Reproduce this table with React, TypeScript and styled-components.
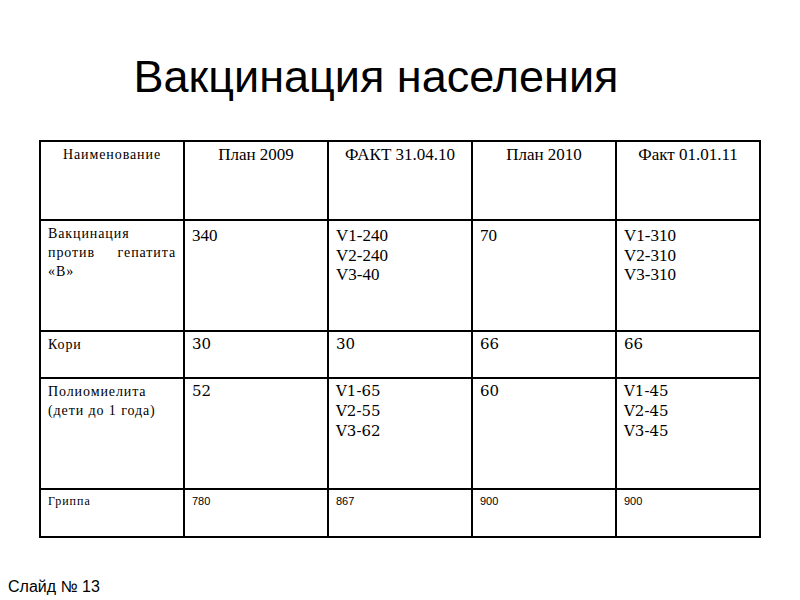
import React from "react";
import styled, { createGlobalStyle } from "styled-components";

const Global = createGlobalStyle`
  html, body { margin: 0; padding: 0; background: #fff; }
  * { box-sizing: border-box; }
`;

const Slide = styled.div`
  width: 800px;
  height: 600px;
  display: flex;
  flex-direction: column;
  padding-top: 54px;
  background: #fff;
  color: #000;
`;

const Title = styled.h1`
  margin: 0;
  padding-right: 48px;
  text-align: center;
  font-family: "Liberation Sans", Arial, sans-serif;
  font-weight: normal;
  font-size: 45px;
  line-height: 45px;
`;

const Grid = styled.div`
  margin: 41px 0 0 39px;
  display: grid;
  grid-template-columns: repeat(5, 144px);
  grid-template-rows: 79px 111px 47px 111px 48px;
  border-left: 2px solid #000;
  border-top: 2px solid #000;
  width: max-content;
`;

type CellProps = { $font: "head" | "name" | "serif" | "dejavu" | "small" | "sans" | "label" };

const fonts: Record<CellProps["$font"], string> = {
  head: `font-family: "Liberation Serif", "Times New Roman", serif; font-size: 17px; line-height: 20px; text-align: center; padding-top: 3px;`,
  label: `font-family: "Liberation Serif", "Times New Roman", serif; font-size: 14px; line-height: 19px; letter-spacing: 0.9px; text-align: center; padding-top: 3px;`,
  name: `font-family: "Liberation Serif", "Times New Roman", serif; font-size: 14px; line-height: 19px; letter-spacing: 0.9px; text-align: justify; padding-top: 3px;`,
  serif: `font-family: "Liberation Serif", "Times New Roman", serif; font-size: 17px; line-height: 19.5px; padding-top: 5px;`,
  dejavu: `font-family: "DejaVu Serif", serif; font-size: 15px; line-height: 20px; padding-top: 2px;`,
  small: `font-family: "Liberation Serif", "Times New Roman", serif; font-size: 12px; line-height: 16px; letter-spacing: 1px; padding-top: 3px;`,
  sans: `font-family: "Liberation Sans", Arial, sans-serif; font-size: 11px; line-height: 16px; padding-top: 3px;`,
};

const Cell = styled.div<CellProps>`
  border-right: 2px solid #000;
  border-bottom: 2px solid #000;
  padding-left: 7px;
  padding-right: 7px;
  white-space: pre-line;
  ${(p) => fonts[p.$font]}
`;

const Footer = styled.div`
  margin-top: auto;
  padding: 0 0 4px 8px;
  font-family: "Liberation Sans", Arial, sans-serif;
  font-size: 16px;
  line-height: 18px;
`;

type Row = { cells: [string, CellProps["$font"]][] };

const rows: Row[] = [
  {
    cells: [
      ["Наименование", "label"],
      ["План 2009", "head"],
      ["ФАКТ 31.04.10", "head"],
      ["План 2010", "head"],
      ["Факт 01.01.11", "head"],
    ],
  },
  {
    cells: [
      ["Вакцинация против гепатита «В»", "name"],
      ["340", "serif"],
      ["V1-240\nV2-240\nV3-40", "serif"],
      ["70", "serif"],
      ["V1-310\nV2-310\nV3-310", "serif"],
    ],
  },
  {
    cells: [
      ["Кори", "name"],
      ["30", "dejavu"],
      ["30", "dejavu"],
      ["66", "dejavu"],
      ["66", "dejavu"],
    ],
  },
  {
    cells: [
      ["Полиомиелита\n(дети до 1 года)", "name"],
      ["52", "dejavu"],
      ["V1-65\nV2-55\nV3-62", "dejavu"],
      ["60", "dejavu"],
      ["V1-45\nV2-45\nV3-45", "dejavu"],
    ],
  },
  {
    cells: [
      ["Гриппа", "small"],
      ["780", "sans"],
      ["867", "sans"],
      ["900", "sans"],
      ["900", "sans"],
    ],
  },
];

export default function App() {
  return (
    <>
      <Global />
      <Slide>
        <Title>Вакцинация населения</Title>
        <Grid>
          {rows.map((r, i) =>
            r.cells.map(([text, font], j) => (
              <Cell key={`${i}-${j}`} $font={font}>
                {text}
              </Cell>
            ))
          )}
        </Grid>
        <Footer>Слайд № 13</Footer>
      </Slide>
    </>
  );
}
